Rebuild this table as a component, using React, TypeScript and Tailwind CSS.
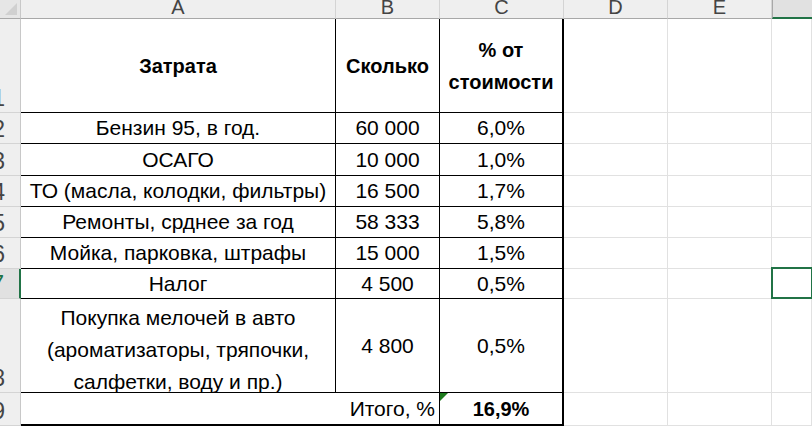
import React from 'react';

const rows = [
  { n: '2', name: 'Бензин 95, в год.', sum: '60 000', pct: '6,0%' },
  { n: '3', name: 'ОСАГО', sum: '10 000', pct: '1,0%' },
  { n: '4', name: 'ТО (масла, колодки, фильтры)', sum: '16 500', pct: '1,7%' },
  { n: '5', name: 'Ремонты, срднее за год', sum: '58 333', pct: '5,8%' },
  { n: '6', name: 'Мойка, парковка, штрафы', sum: '15 000', pct: '1,5%' },
  { n: '7', name: 'Налог', sum: '4 500', pct: '0,5%' },
];

const font = { fontFamily: '"Liberation Sans", Arial, sans-serif' };

const RowNum: React.FC<{ n: string; active?: boolean }> = ({ n, active }) => (
  <div
    className={`overflow-hidden flex items-end justify-end pr-[15px] pb-[2px] text-[23px] leading-none ${
      active
        ? 'bg-[#e1e1e1] text-[#217346] border-r-2 border-r-[#217346] border-b border-b-[#d4d4d4]'
        : 'bg-[#efefef] text-[#444] border-r border-r-[#c8c8c8] border-b border-b-[#d4d4d4]'
    }`}
  >
    {n}
  </div>
);

const Grid: React.FC<{ selected?: boolean }> = ({ selected }) => (
  <div className="relative border-r border-b border-[#e1e1e1] bg-white">
    {selected && (
      <div className="absolute -left-[1px] -top-[2px] -right-[2px] -bottom-[1px] border-2 border-[#217346]" />
    )}
  </div>
);

export default function App() {
  const cell = 'flex items-center justify-center text-center bg-white text-black text-[21px] border-r border-b border-black';
  const head = 'flex items-center justify-center text-center bg-white text-black text-[20px] font-bold border-r border-b border-black';
  return (
    <div className="w-[812px] h-[426px] overflow-hidden bg-white" style={font}>
      <div className="grid grid-cols-[21px_315px_104px_124px_104px_104px_1fr] grid-rows-[19px_94px_31px_32px_31px_31px_31px_30px_94px_33px]">
        {/* column headers */}
        <div className="relative bg-[#e6e6e6] border-r border-r-[#c8c8c8] border-b border-b-[#a8a8a8] overflow-hidden">
          <div className="absolute right-[3px] bottom-[3px] w-0 h-0 border-l-[12px] border-l-transparent border-b-[12px] border-b-[#d0d0d0]" />
        </div>
        {['A', 'B', 'C', 'D', 'E'].map((l) => (
          <div
            key={l}
            className="flex items-end justify-center pb-[1px] overflow-hidden bg-[#efefef] text-[#444] text-[20px] leading-none border-r border-r-[#d4d4d4] border-b border-b-[#a8a8a8]"
          >
            {l}
          </div>
        ))}
        <div className="bg-[#e1e1e1] border-b-2 border-b-[#217346] border-l border-l-[#a8a8a8]" />

        {/* row 1 */}
        <RowNum n="1" />
        <div className={head}>Затрата</div>
        <div className={head}>Сколько</div>
        <div className={`${head} leading-[32px] border-r-2`}>
          % от
          <br />
          стоимости
        </div>
        <Grid />
        <Grid />
        <Grid />

        {rows.map((r) => (
          <React.Fragment key={r.n}>
            <RowNum n={r.n} active={r.n === '7'} />
            <div className={`${cell} whitespace-nowrap`}>{r.name}</div>
            <div className={cell}>{r.sum}</div>
            <div className={`${cell} border-r-2`}>{r.pct}</div>
            <Grid />
            <Grid />
            <Grid selected={r.n === '7'} />
          </React.Fragment>
        ))}

        {/* row 8 */}
        <RowNum n="8" />
        <div className={`${cell} items-start pt-[3px] leading-[32px]`}>
          <span>
            Покупка мелочей в авто
            <br />
            (ароматизаторы, тряпочки,
            <br />
            салфетки, воду и пр.)
          </span>
        </div>
        <div className={cell}>4 800</div>
        <div className={`${cell} border-r-2`}>0,5%</div>
        <Grid />
        <Grid />
        <Grid />

        {/* row 9 */}
        <RowNum n="9" />
        <div className="col-span-2 flex items-center justify-end pr-[4px] bg-white text-black text-[21px] border-r border-b-2 border-black">
          Итого, %
        </div>
        <div className="relative flex items-center justify-center bg-white text-black text-[20px] font-bold border-r-2 border-b-2 border-black">
          <div className="absolute left-0 top-0 w-0 h-0 border-t-[8px] border-t-[#1e7b1e] border-r-[8px] border-r-transparent" />
          16,9%
        </div>
        <Grid />
        <Grid />
        <Grid />
      </div>
    </div>
  );
}
